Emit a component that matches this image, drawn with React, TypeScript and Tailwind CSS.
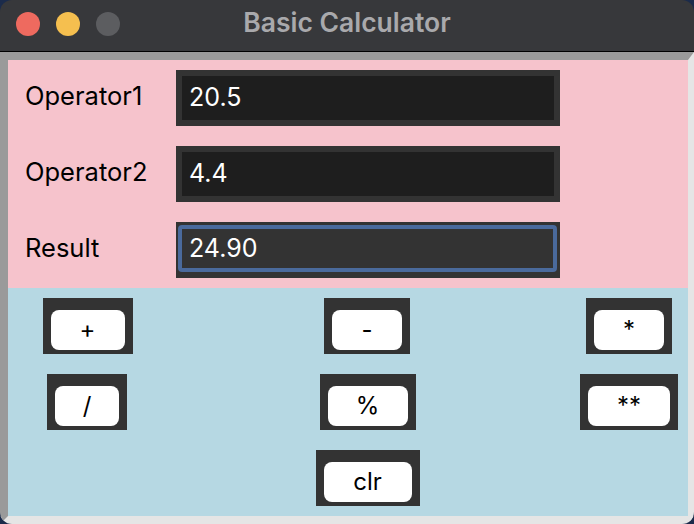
import React from 'react'

const font = { fontFamily: 'Inter, "Liberation Sans", sans-serif' }

function Field({ label, value, focused }: { label: string; value: string; focused?: boolean }) {
  return (
    <div className="flex items-center h-[56px]">
      <div className="w-[168px] pl-[17px] pb-[4px] text-[25.5px] text-black">{label}</div>
      <div className="w-[384px] h-[56px] bg-[#333333] p-[6px]">
        {focused ? (
          <div className="-ml-[4px] -mt-[3px] -mr-[3px] h-[47px] border-[4px] border-[#4a6a9c] rounded-[4px] bg-[#333333] flex items-center pl-[7px] text-[25px] text-white">
            {value}
          </div>
        ) : (
          <div className="h-full bg-[#1e1e1e] flex items-center pl-[7px] text-[25px] text-white">{value}</div>
        )}
      </div>
    </div>
  )
}

function Btn({ label, w }: { label: string; w: string }) {
  return (
    <div className={`${w} h-[56px] bg-[#333333] pt-[12px] pb-[4px] px-[8px]`}>
      <div className="h-[40px] bg-white rounded-[8px] flex items-center justify-center text-[24px] text-black">
        {label}
      </div>
    </div>
  )
}

export default function App() {
  return (
    <div className="w-[694px] h-[524px] bg-[#1b2b4b] overflow-hidden" style={font}>
      <div className="w-full h-full rounded-[12px] overflow-hidden flex flex-col">
        {/* title bar */}
        <div className="relative h-[52px] bg-[#37383b] border-b border-black flex items-center justify-center shrink-0">
          <div className="absolute left-[16px] top-[12px] flex gap-[16px]">
            <div className="w-[24px] h-[24px] rounded-full bg-[#ee6a5f]" />
            <div className="w-[24px] h-[24px] rounded-full bg-[#f5bf4f]" />
            <div className="w-[24px] h-[24px] rounded-full bg-[#5c5d60]" />
          </div>
          <div className="text-[26.5px] font-semibold text-[#a9a9ac] -mt-[5px]">Basic Calculator</div>
        </div>

        {/* body */}
        <div className="flex-1 border-t-[8px] border-l-[8px] border-t-[#9a9a9a] border-l-[#9a9a9a] border-r-[6px] border-b-[8px] border-r-[#e5e5e5] border-b-[#e5e5e5] flex flex-col">
          <div className="h-[228px] bg-[#f6c3cc] pt-[10px] flex flex-col gap-[20px]">
            <Field label="Operator1" value="20.5" />
            <Field label="Operator2" value="4.4" />
            <Field label="Result" value="24.90" focused />
          </div>
          <div className="flex-1 bg-[#b6d8e3] pt-[10px] grid grid-cols-[158px_402px_120px] grid-rows-[56px_56px_56px] gap-y-[20px] justify-items-center">
            <div className="pl-[1px]"><Btn label="+" w="w-[90px]" /></div>
            <div><Btn label="-" w="w-[86px]" /></div>
            <div className="pl-[2px]"><Btn label="*" w="w-[86px]" /></div>
            <div><Btn label="/" w="w-[80px]" /></div>
            <div className="pl-[1px]"><Btn label="%" w="w-[96px]" /></div>
            <div className="pl-[2px]"><Btn label="**" w="w-[98px]" /></div>
            <div />
            <div className="pl-[1px]"><Btn label="clr" w="w-[104px]" /></div>
            <div />
          </div>
        </div>
      </div>
    </div>
  )
}
